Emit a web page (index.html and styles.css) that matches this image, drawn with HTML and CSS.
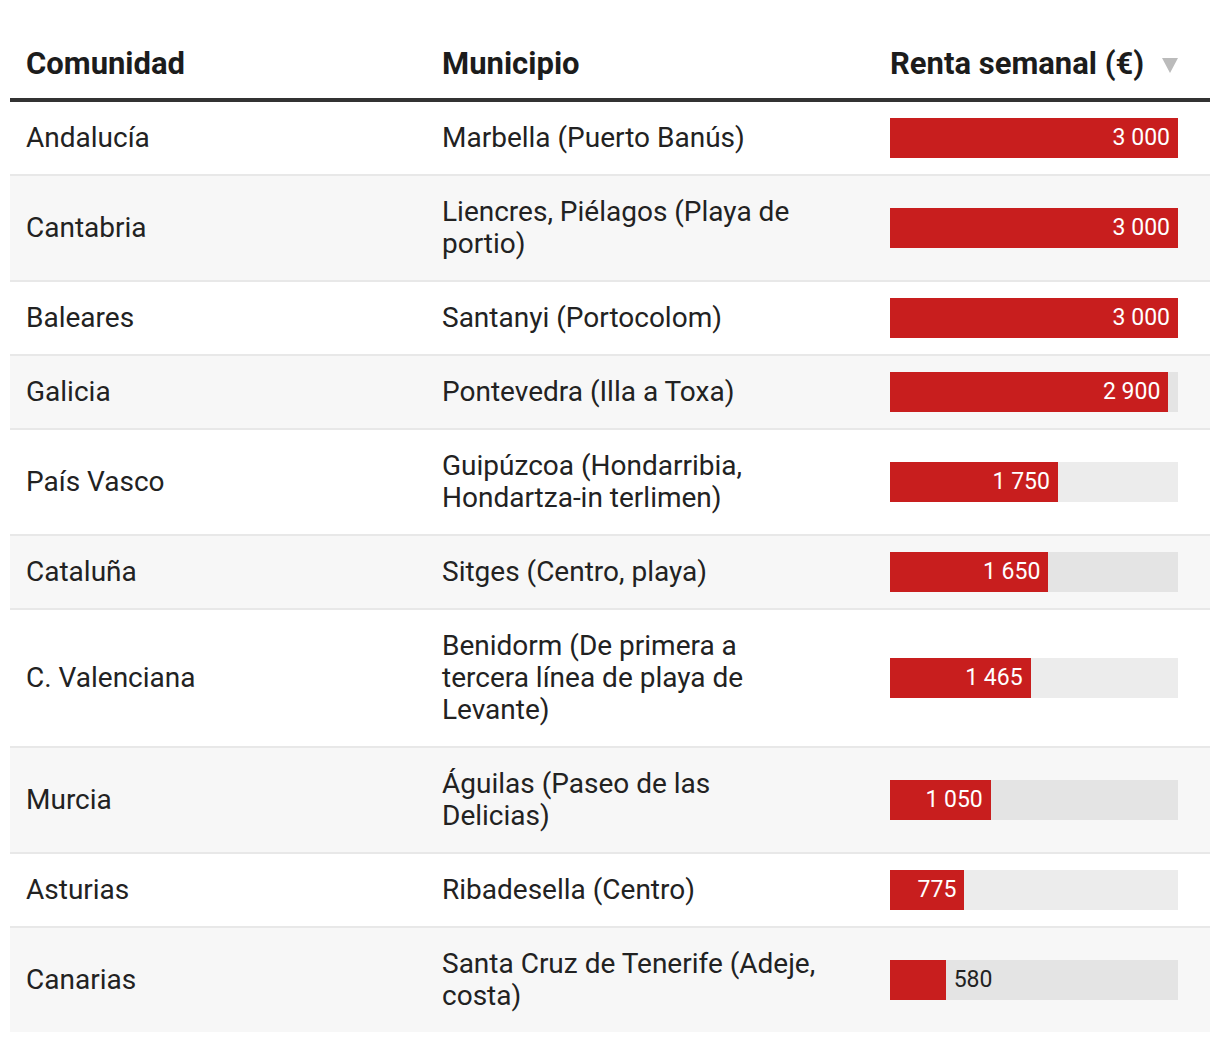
FILE: index.html
```html
<!DOCTYPE html>
<html lang="es">
<head>
<meta charset="utf-8">
<title>Renta semanal</title>
<link rel="stylesheet" href="styles.css">
</head>
<body>
<table class="rent-table">
  <colgroup>
    <col class="col-com">
    <col class="col-mun">
    <col class="col-val">
  </colgroup>
  <thead>
    <tr>
      <th>Comunidad</th>
      <th>Municipio</th>
      <th><div class="sort-head"><span>Renta semanal (€)</span><span class="sort-arrow"></span></div></th>
    </tr>
  </thead>
  <tbody>
    <tr>
      <td>Andalucía</td>
      <td><div class="mun">Marbella (Puerto Banús)</div></td>
      <td class="cell-val"><div class="track"><div class="bar" style="width:100%"><span class="val">3 000</span></div></div></td>
    </tr>
    <tr>
      <td>Cantabria</td>
      <td><div class="mun">Liencres, Piélagos (Playa de portio)</div></td>
      <td class="cell-val"><div class="track"><div class="bar" style="width:100%"><span class="val">3 000</span></div></div></td>
    </tr>
    <tr>
      <td>Baleares</td>
      <td><div class="mun">Santanyi (Portocolom)</div></td>
      <td class="cell-val"><div class="track"><div class="bar" style="width:100%"><span class="val">3 000</span></div></div></td>
    </tr>
    <tr>
      <td>Galicia</td>
      <td><div class="mun">Pontevedra (Illa a Toxa)</div></td>
      <td class="cell-val"><div class="track"><div class="bar" style="width:96.667%"><span class="val">2 900</span></div></div></td>
    </tr>
    <tr>
      <td>País Vasco</td>
      <td><div class="mun">Guipúzcoa (Hondarribia, Hondartza-in terlimen)</div></td>
      <td class="cell-val"><div class="track"><div class="bar" style="width:58.333%"><span class="val">1 750</span></div></div></td>
    </tr>
    <tr>
      <td>Cataluña</td>
      <td><div class="mun">Sitges (Centro, playa)</div></td>
      <td class="cell-val"><div class="track"><div class="bar" style="width:55%"><span class="val">1 650</span></div></div></td>
    </tr>
    <tr>
      <td>C. Valenciana</td>
      <td><div class="mun">Benidorm (De primera a tercera línea de playa de Levante)</div></td>
      <td class="cell-val"><div class="track"><div class="bar" style="width:48.833%"><span class="val">1 465</span></div></div></td>
    </tr>
    <tr>
      <td>Murcia</td>
      <td><div class="mun">Águilas (Paseo de las Delicias)</div></td>
      <td class="cell-val"><div class="track"><div class="bar" style="width:35%"><span class="val">1 050</span></div></div></td>
    </tr>
    <tr>
      <td>Asturias</td>
      <td><div class="mun">Ribadesella (Centro)</div></td>
      <td class="cell-val"><div class="track"><div class="bar" style="width:25.833%"><span class="val">775</span></div></div></td>
    </tr>
    <tr>
      <td>Canarias</td>
      <td><div class="mun">Santa Cruz de Tenerife (Adeje, costa)</div></td>
      <td class="cell-val"><div class="track"><div class="bar" style="width:19.333%"></div><span class="val val-out">580</span></div></td>
    </tr>
  </tbody>
</table>
</body>
</html>
```
FILE: styles.css
```css
html, body {
  margin: 0;
  padding: 0;
  background: #ffffff;
}

body {
  padding: 0 10px;
  font-family: Roboto, "Liberation Sans", Arial, sans-serif;
  color: #222222;
}

.rent-table {
  width: 1200px;
  border-collapse: collapse;
  table-layout: fixed;
}

.col-com { width: 416px; }
.col-mun { width: 447px; }
.col-val { width: 337px; }

.rent-table th {
  text-align: left;
  font-weight: 700;
  font-size: 31px;
  line-height: 32px;
  color: #1c1c1c;
  padding: 48px 17px 18px 16px;
  border-bottom: 4px solid #333333;
  vertical-align: bottom;
}

.rent-table th:last-child {
  padding-left: 17px;
}

.sort-head {
  width: 288px;
  display: flex;
  justify-content: space-between;
  align-items: center;
}

.sort-arrow {
  width: 0;
  height: 0;
  border-left: 8px solid transparent;
  border-right: 8px solid transparent;
  border-top: 15px solid #bbbbbb;
  margin-top: 2px;
}

.rent-table td {
  font-size: 28px;
  line-height: 32px;
  padding: 20px 17px 20px 16px;
  border-bottom: 2px solid #e8e8e8;
  vertical-align: middle;
}

.rent-table td.cell-val {
  padding: 16px 17px;
}

.rent-table tbody tr:nth-child(even) td {
  background: #f7f7f7;
}

.rent-table tbody tr:last-child td {
  border-bottom: none;
}

.mun {
  width: 378px;
}

.track {
  width: 288px;
  height: 40px;
  background: rgba(0, 0, 0, 0.075);
  display: flex;
  align-items: center;
}

.bar {
  height: 40px;
  background: #c81e1e;
  display: flex;
  align-items: center;
  justify-content: flex-end;
  box-sizing: border-box;
  padding-right: 8px;
}

.val {
  font-size: 23px;
  line-height: 40px;
  color: #ffffff;
  white-space: nowrap;
}

.val-out {
  color: #222222;
  padding-left: 8px;
}
```
